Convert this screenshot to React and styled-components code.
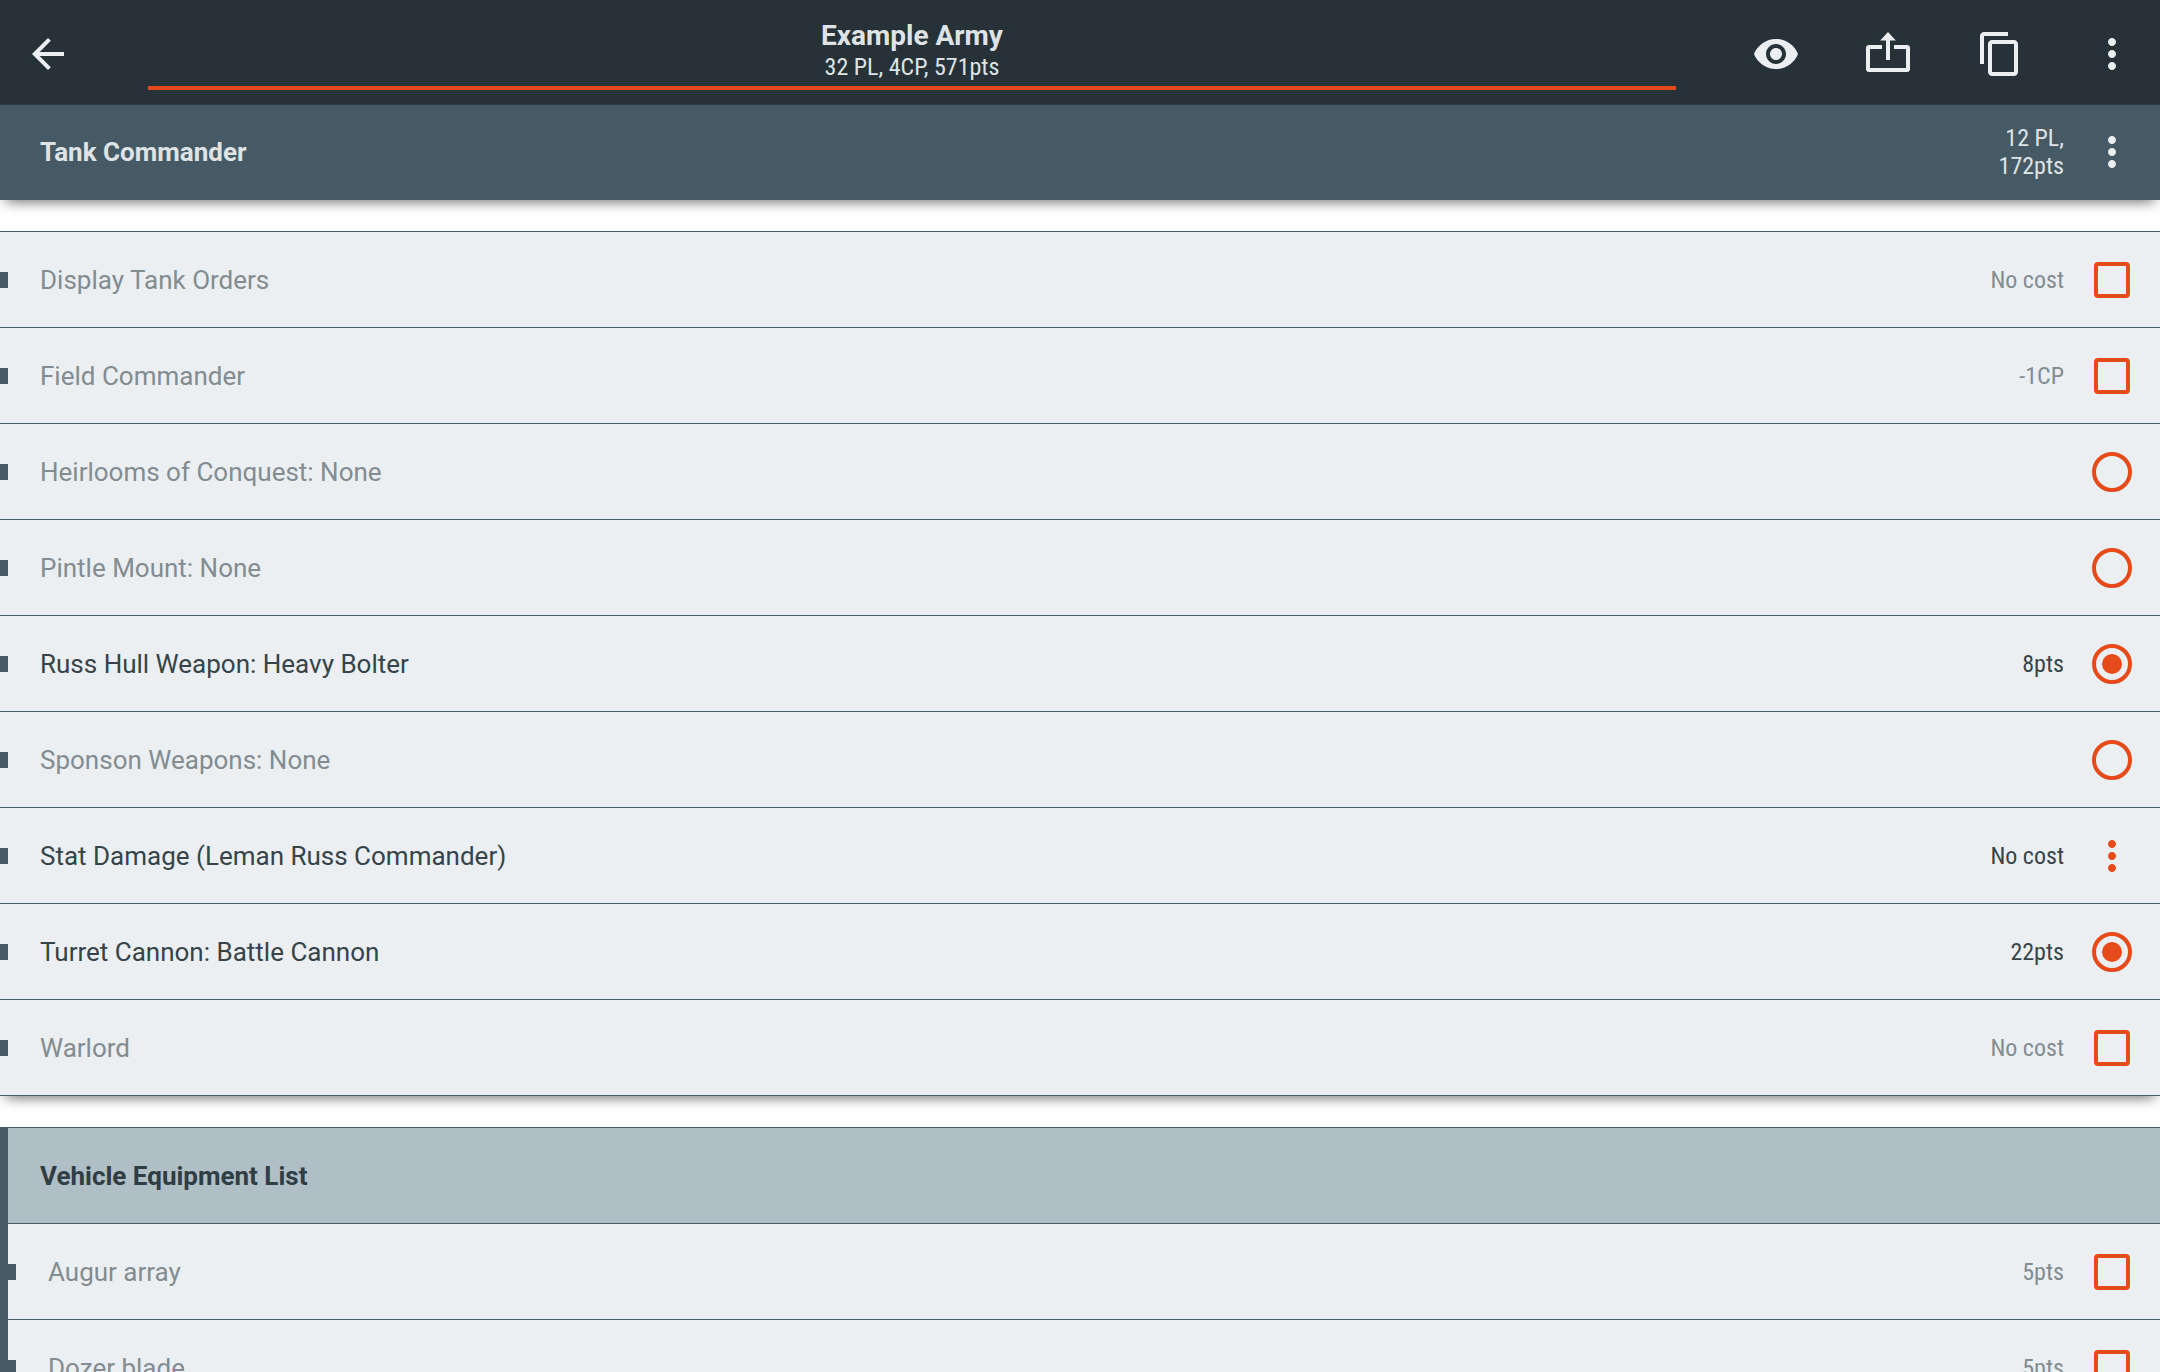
import React from "react";
import styled, { createGlobalStyle, css } from "styled-components";

const color = {
  ink: "#263238",
  slate: "#455a64",
  mist: "#b0bec5",
  paper: "#ebeff2",
  accent: "#e64a19",
  title: "#dfe3e5",
  active: "#36444a",
  muted: "#828c91",
};

const condensed = css`
  font-family: "Roboto Condensed", "Liberation Sans Narrow", Roboto, sans-serif;
`;

const dropShadow = css`
  box-shadow: 0 8px 12px -6px rgba(0, 0, 0, 0.55);
`;

const GlobalStyle = createGlobalStyle`
  * { box-sizing: border-box; }
  body { margin: 0; background: #fff; font-family: Roboto, sans-serif; }
`;

const Shell = styled.div`
  display: flex;
  flex-direction: column;
  height: 100vh;
`;

const AppBar = styled.header`
  display: flex;
  align-items: center;
  gap: 76px;
  flex: none;
  height: 104px;
  padding: 0 24px;
  background: ${color.ink};
`;

const IconButton = styled.button`
  display: grid;
  place-items: center;
  flex: none;
  width: 48px;
  height: 48px;
  margin: ${(p) => (p.$inBar ? "4px 0 0" : "0")};
  padding: 0;
  border: 0;
  background: none;
  color: ${(p) => (p.$accent ? color.accent : color.paper)};
  cursor: pointer;
`;

const Actions = styled.nav`
  display: flex;
  gap: 64px;
`;

const RosterTab = styled.button`
  display: flex;
  flex-direction: column;
  align-items: center;
  justify-content: flex-end;
  align-self: stretch;
  flex: 1;
  min-width: 0;
  margin: 0 0 14px;
  padding: 0 0 5px;
  border: 0;
  border-bottom: 4px solid ${color.accent};
  background: none;
  color: ${color.title};
  font-family: Roboto, sans-serif;
  cursor: pointer;
`;

const RosterName = styled.span`
  font-size: 28px;
  line-height: 34px;
  font-weight: 700;
`;

const RosterCost = styled.span`
  ${condensed}
  font-size: 24px;
  line-height: 28px;
`;

const UnitBar = styled.div`
  position: relative;
  z-index: 1;
  display: flex;
  align-items: center;
  gap: 24px;
  flex: none;
  height: 96px;
  padding: 0 24px 0 40px;
  border-top: 1px solid #2d3c43;
  border-bottom: 1px solid ${color.slate};
  background: ${color.slate};
  color: ${color.title};
  ${dropShadow}
`;

const Heading = styled.h2`
  flex: 1;
  margin: 0;
  font-size: 26px;
  line-height: 32px;
  font-weight: 700;
`;

const Cost = styled.span`
  ${condensed}
  flex: none;
  max-width: 80px;
  font-size: 24px;
  line-height: 28px;
  text-align: right;
`;

const Scroller = styled.main`
  flex: 1;
  min-height: 0;
  overflow-y: auto;
  scrollbar-width: none;
  padding-top: 31px;
`;

const OptionList = styled.section`
  border-top: 1px solid ${color.slate};
  ${dropShadow}
`;

const Group = styled.section`
  margin-top: 31px;
  padding-top: 1px;
  border-left: 8px solid ${color.slate};
  background: ${color.slate};
`;

const GroupHeader = styled.div`
  display: flex;
  align-items: center;
  height: 96px;
  padding: 1px 32px 0;
  border-bottom: 1px solid ${color.slate};
  background: ${color.mist};
  color: #2f3d44;
`;

const Row = styled.div`
  display: flex;
  align-items: center;
  gap: 24px;
  height: 96px;
  padding: 1px 24px 0 0;
  border-bottom: 1px solid ${color.slate};
  background: ${color.paper};
  color: ${(p) => (p.$on ? color.active : color.muted)};

  &::before {
    content: "";
    width: 8px;
    height: 16px;
    margin-right: 8px;
    background: ${color.slate};
  }
`;

const Name = styled.label`
  flex: 1;
  font-size: 26px;
  line-height: 32px;
`;

const ControlCell = styled.span`
  display: grid;
  place-items: center;
  flex: none;
  width: 48px;
  height: 48px;
`;

const Checkbox = styled.input.attrs({ type: "checkbox" })`
  appearance: none;
  width: 36px;
  height: 36px;
  margin: 0;
  border: 4px solid ${color.accent};
  border-radius: 4px;

  &:checked {
    background: ${color.accent};
  }
`;

const Radio = styled.input.attrs({ type: "radio" })`
  appearance: none;
  display: grid;
  place-items: center;
  width: 40px;
  height: 40px;
  margin: 0;
  border: 4px solid ${color.accent};
  border-radius: 50%;

  &:checked::before {
    content: "";
    width: 20px;
    height: 20px;
    border-radius: 50%;
    background: ${color.accent};
  }
`;

const Icon = ({ d }) => (
  <svg width="48" height="48" viewBox="0 0 24 24" fill="currentColor" aria-hidden="true">
    <path d={d} />
  </svg>
);

const icons = {
  back: "M20 11H7.83l5.59-5.59L12 4l-8 8 8 8 1.41-1.41L7.83 13H20v-2z",
  view: "M12 4.5C7 4.5 2.73 7.61 1 12c1.73 4.39 6 7.5 11 7.5s9.27-3.11 11-7.5c-1.73-4.39-6-7.5-11-7.5zM12 17c-2.76 0-5-2.24-5-5s2.24-5 5-5 5 2.24 5 5-2.24 5-5 5zm0-8c-1.66 0-3 1.34-3 3s1.34 3 3 3 3-1.34 3-3-1.34-3-3-3z",
  share:
    "M12 1 15.9 5.2H13V15H11V5.2H8.1zM9 7.5V9.5H3V19H21V9.5H15V7.5H21.5A1.5 1.5 0 0 1 23 9V19.5A1.5 1.5 0 0 1 21.5 21H2.5A1.5 1.5 0 0 1 1 19.5V9A1.5 1.5 0 0 1 2.5 7.5z",
  copy: "M16 1H4c-1.1 0-2 .9-2 2v14h2V3h12V1zm3 4H8c-1.1 0-2 .9-2 2v14c0 1.1.9 2 2 2h11c1.1 0 2-.9 2-2V7c0-1.1-.9-2-2-2zm0 16H8V7h11v14z",
  more: "M12 8c1.1 0 2-.9 2-2s-.9-2-2-2-2 .9-2 2 .9 2 2 2zm0 2c-1.1 0-2 .9-2 2s.9 2 2 2 2-.9 2-2-.9-2-2-2zm0 6c-1.1 0-2 .9-2 2s.9 2 2 2 2-.9 2-2-.9-2-2-2z",
};

const options = [
  { id: "orders", name: "Display Tank Orders", cost: "No cost", kind: "checkbox" },
  { id: "field", name: "Field Commander", cost: "-1CP", kind: "checkbox" },
  { id: "heirlooms", name: "Heirlooms of Conquest: None", kind: "radio" },
  { id: "pintle", name: "Pintle Mount: None", kind: "radio" },
  { id: "hull", name: "Russ Hull Weapon: Heavy Bolter", cost: "8pts", kind: "radio", on: true },
  { id: "sponson", name: "Sponson Weapons: None", kind: "radio" },
  { id: "damage", name: "Stat Damage (Leman Russ Commander)", cost: "No cost", kind: "menu", on: true },
  { id: "turret", name: "Turret Cannon: Battle Cannon", cost: "22pts", kind: "radio", on: true },
  { id: "warlord", name: "Warlord", cost: "No cost", kind: "checkbox" },
];

const equipment = [
  { id: "augur", name: "Augur array", cost: "5pts", kind: "checkbox" },
  { id: "dozer", name: "Dozer blade", cost: "5pts", kind: "checkbox" },
];

function OptionRow({ id, name, cost, kind, on }) {
  return (
    <Row $on={on}>
      <Name htmlFor={id}>{name}</Name>
      {cost && <Cost>{cost}</Cost>}
      <ControlCell>
        {kind === "checkbox" && <Checkbox id={id} defaultChecked={on} />}
        {kind === "radio" && <Radio id={id} name={id} defaultChecked={on} />}
        {kind === "menu" && (
          <IconButton id={id} $accent>
            <Icon d={icons.more} />
          </IconButton>
        )}
      </ControlCell>
    </Row>
  );
}

export default function App() {
  return (
    <Shell>
      <GlobalStyle />
      <AppBar>
        <IconButton $inBar aria-label="Back">
          <Icon d={icons.back} />
        </IconButton>
        <RosterTab>
          <RosterName>Example Army</RosterName>
          <RosterCost>32 PL, 4CP, 571pts</RosterCost>
        </RosterTab>
        <Actions>
          <IconButton $inBar aria-label="View">
            <Icon d={icons.view} />
          </IconButton>
          <IconButton $inBar aria-label="Share">
            <Icon d={icons.share} />
          </IconButton>
          <IconButton $inBar aria-label="Duplicate">
            <Icon d={icons.copy} />
          </IconButton>
          <IconButton $inBar aria-label="More">
            <Icon d={icons.more} />
          </IconButton>
        </Actions>
      </AppBar>
      <UnitBar>
        <Heading>Tank Commander</Heading>
        <Cost>12 PL, 172pts</Cost>
        <IconButton aria-label="Unit menu">
          <Icon d={icons.more} />
        </IconButton>
      </UnitBar>
      <Scroller>
        <OptionList>
          {options.map((o) => (
            <OptionRow key={o.id} {...o} />
          ))}
        </OptionList>
        <Group>
          <GroupHeader>
            <Heading>Vehicle Equipment List</Heading>
          </GroupHeader>
          {equipment.map((o) => (
            <OptionRow key={o.id} {...o} />
          ))}
        </Group>
      </Scroller>
    </Shell>
  );
}
